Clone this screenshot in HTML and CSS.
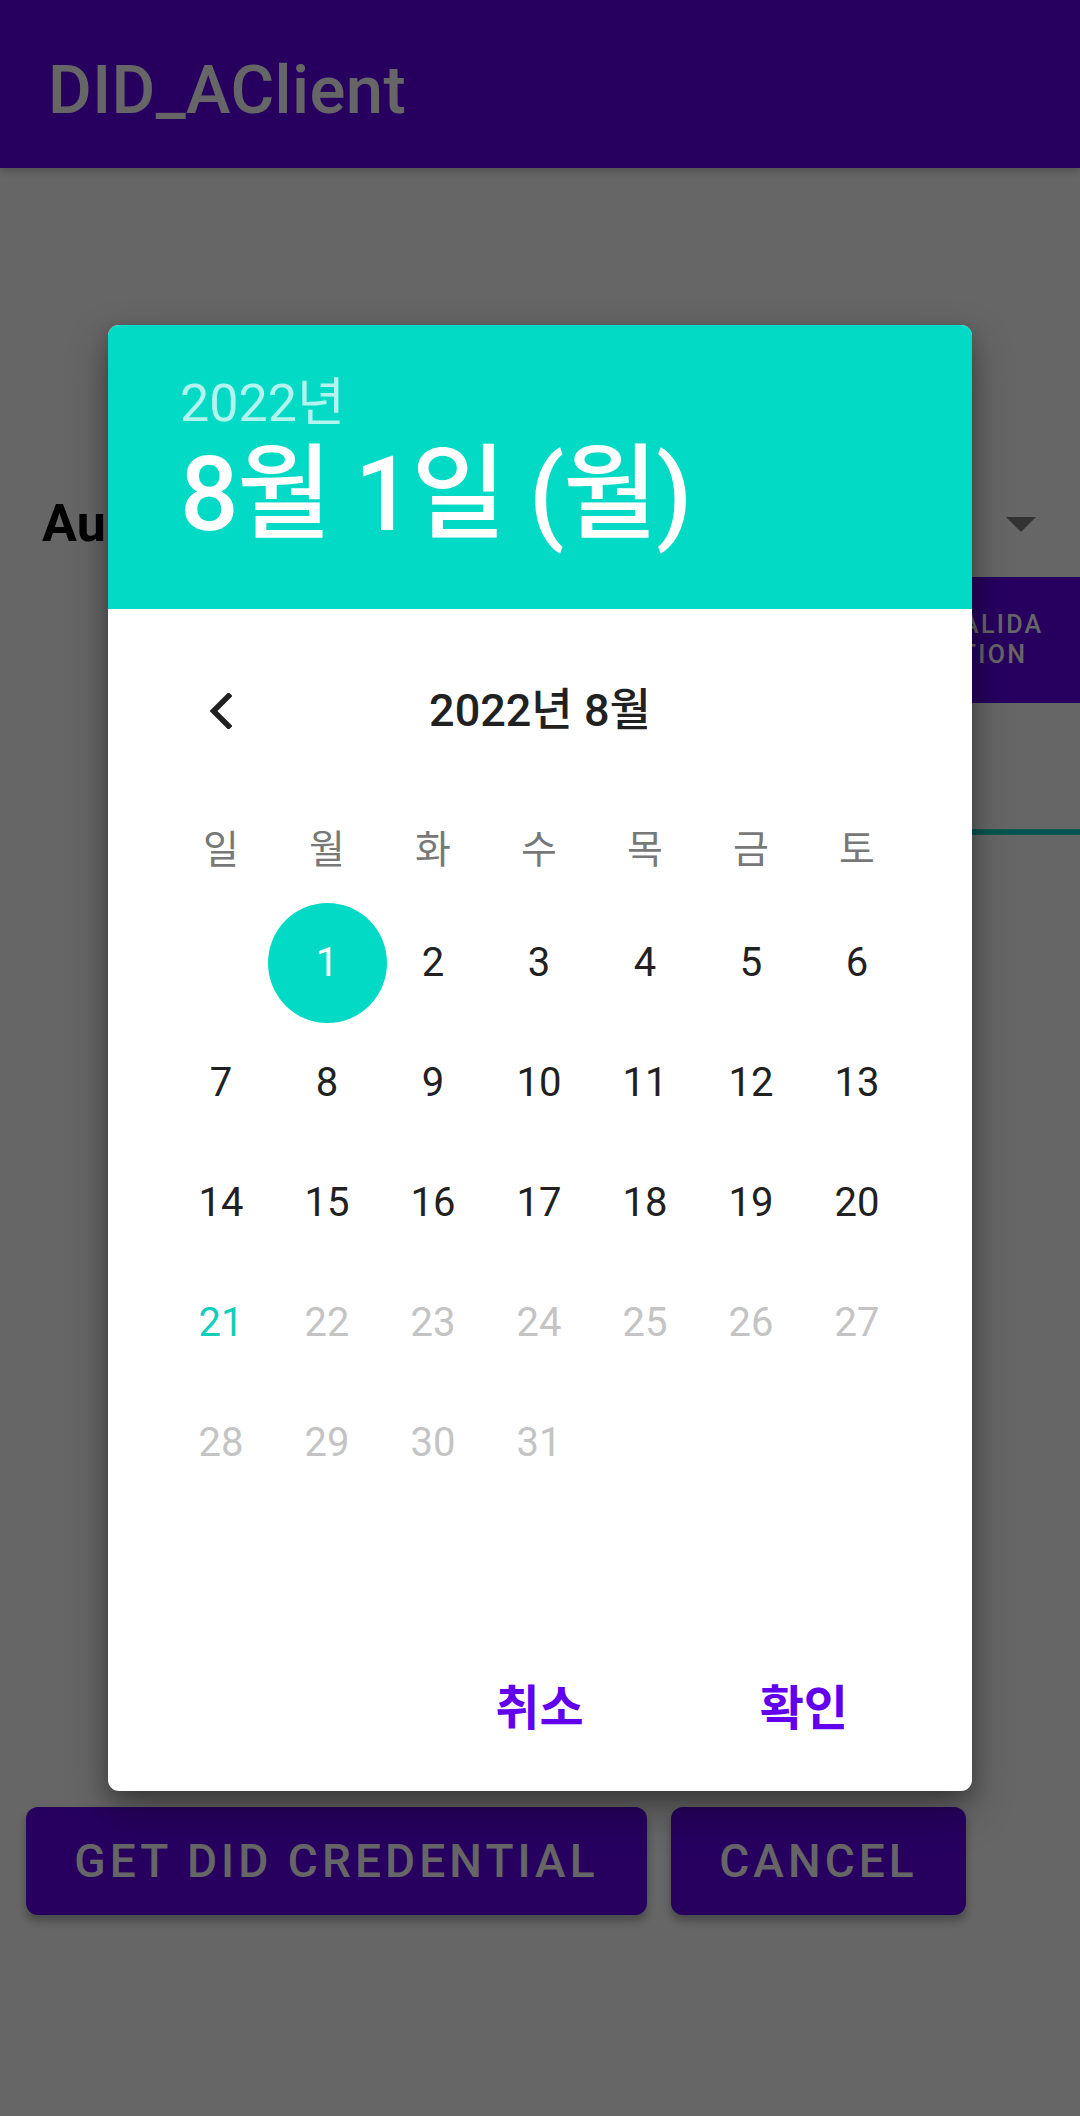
FILE: index.html
```html
<!DOCTYPE html>
<html lang="ko">
<head>
<meta charset="utf-8">
<title>DID_AClient</title>
<link rel="stylesheet" href="styles.css">
</head>
<body>
<div class="page">
  <header class="appbar"><span class="appbar-title">DID_AClient</span></header>
  <main class="content">
    <div class="spinner-row">
      <span class="label">Au</span>
      <svg class="spinner-arrow" width="30" height="15" viewBox="0 0 30 15"><path d="M0 0 L30 0 L15 15 Z" fill="#808080"/></svg>
    </div>
    <div class="validate-row">
      <button class="validate-btn">VALIDA<br>TION</button>
    </div>
    <div class="field"></div>
    <div class="actions">
      <button class="action-btn action-wide">GET DID CREDENTIAL</button>
      <button class="action-btn action-narrow">CANCEL</button>
    </div>
  </main>

  <div class="scrim">
    <div class="dialog">
      <div class="dialog-header">
        <div class="header-year">2022년</div>
        <div class="header-date">8월 1일 (월)</div>
      </div>
      <div class="month-row">
        <div class="month-prev">
          <svg width="24" height="36" viewBox="0 0 24 36"><path d="M20.5 3 L5.5 18 L20.5 33" fill="none" stroke="#212121" stroke-width="5.5" stroke-linecap="square" stroke-linejoin="miter"/></svg>
        </div>
        <div class="month-title">2022년 8월</div>
        <div></div>
      </div>
      <div class="weekdays">
        <span>일</span><span>월</span><span>화</span><span>수</span><span>목</span><span>금</span><span>토</span>
      </div>
      <div class="days">
        <span></span>
        <span class="day selected"><i class="dot">1</i></span>
        <span class="day">2</span><span class="day">3</span><span class="day">4</span><span class="day">5</span><span class="day">6</span>
        <span class="day">7</span><span class="day">8</span><span class="day">9</span><span class="day">10</span><span class="day">11</span><span class="day">12</span><span class="day">13</span>
        <span class="day">14</span><span class="day">15</span><span class="day">16</span><span class="day">17</span><span class="day">18</span><span class="day">19</span><span class="day">20</span>
        <span class="day today">21</span><span class="day off">22</span><span class="day off">23</span><span class="day off">24</span><span class="day off">25</span><span class="day off">26</span><span class="day off">27</span>
        <span class="day off">28</span><span class="day off">29</span><span class="day off">30</span><span class="day off">31</span>
      </div>
      <div class="dialog-buttons">
        <button class="text-btn">취소</button>
        <button class="text-btn">확인</button>
      </div>
    </div>
  </div>
</div>
</body>
</html>
```

FILE: styles.css
```css
html, body {
  margin: 0;
  padding: 0;
}
body {
  width: 1080px;
  height: 2116px;
  overflow: hidden;
  font-family: "Roboto", "Noto Sans CJK KR", sans-serif;
}
.page {
  position: relative;
  width: 1080px;
  height: 2116px;
  background: #ffffff;
  overflow: hidden;
}
.appbar {
  box-sizing: border-box;
  height: 168px;
  background: #6200ee;
  padding: 50px 0 0 48px;
  box-shadow: 0 4px 8px rgba(0,0,0,0.2);
}
.appbar-title {
  display: block;
  color: #ffffff;
  font-size: 67px;
  font-weight: 500;
  line-height: 80px;
  letter-spacing: 0.4px;
}
.content {
  display: flex;
  flex-direction: column;
}
.spinner-row {
  margin-top: 326px;
  height: 60px;
  display: flex;
  align-items: center;
  justify-content: space-between;
  padding: 0 44px 0 42px;
}
.label {
  font-size: 52px;
  font-weight: 700;
  line-height: 60px;
  color: #000000;
}
.validate-row {
  margin-top: 23px;
  display: flex;
  justify-content: flex-end;
}
.validate-btn {
  width: 172px;
  height: 126px;
  border: 0;
  background: #6200ee;
  color: #ffffff;
  font-family: "Roboto", sans-serif;
  font-size: 25px;
  font-weight: 500;
  line-height: 30px;
  letter-spacing: 2.3px;
  padding: 0;
  text-align: center;
}
.field {
  margin: 126px 0 0 540px;
  height: 6px;
  background: #03dac5;
}
.actions {
  margin-top: 972px;
  display: flex;
  gap: 24px;
  padding-left: 26px;
}
.action-btn {
  height: 108px;
  border: 0;
  border-radius: 12px;
  background: #6200ee;
  color: #ffffff;
  font-family: "Roboto", sans-serif;
  font-size: 46px;
  font-weight: 500;
  letter-spacing: 4.1px;
  padding: 0;
  box-shadow: 0 6px 10px rgba(0,0,0,0.3);
}
.action-wide { width: 621px; }
.action-narrow { width: 295px; }

.scrim {
  position: absolute;
  inset: 0;
  background: rgba(0,0,0,0.6);
}
.dialog {
  position: absolute;
  left: 108px;
  top: 325px;
  width: 864px;
  background: #ffffff;
  border-radius: 11px;
  overflow: hidden;
  box-shadow: 0 18px 40px rgba(0,0,0,0.35), 0 6px 16px rgba(0,0,0,0.2);
}
.dialog-header {
  box-sizing: border-box;
  height: 284px;
  background: #03dac5;
  padding: 50px 0 0 72px;
}
.header-year {
  font-size: 52px;
  line-height: 58px;
  color: rgba(255,255,255,0.7);
}
.header-date {
  font-size: 103px;
  font-weight: 500;
  line-height: 124px;
  letter-spacing: -1.5px;
  color: #ffffff;
}
.month-row {
  margin-top: 42px;
  height: 120px;
  display: grid;
  grid-template-columns: 1fr auto 1fr;
  align-items: center;
}
.month-prev {
  display: flex;
  align-items: center;
  padding-left: 100px;
}
.month-title {
  font-size: 45px;
  font-weight: 500;
  line-height: 120px;
  color: #212121;
}
.weekdays {
  margin-top: 26px;
  display: grid;
  grid-template-columns: repeat(7, 106px);
  padding-left: 60px;
  height: 106px;
}
.weekdays span {
  display: flex;
  align-items: center;
  justify-content: center;
  font-size: 39px;
  line-height: 106px;
  color: #787878;
}
.days {
  display: grid;
  grid-template-columns: repeat(7, 106px);
  grid-auto-rows: 120px;
  padding-left: 60px;
  height: 600px;
}
.day {
  display: flex;
  align-items: center;
  justify-content: center;
  font-size: 40px;
  line-height: 120px;
  color: #212121;
}
.day.today { color: #0fcfbc; }
.day.off { color: #c4c4c4; }
.dot {
  flex-shrink: 0;
  font-style: normal;
  width: 119px;
  height: 120px;
  border-radius: 50%;
  background: #03dac5;
  color: #ffffff;
  display: flex;
  align-items: center;
  justify-content: center;
  line-height: 120px;
}
.dialog-buttons {
  margin-top: 140px;
  padding: 0 96px 16px 0;
  display: flex;
  justify-content: flex-end;
  gap: 120px;
}
.text-btn {
  height: 132px;
  border: 0;
  background: transparent;
  padding: 0 28px;
  font-family: "Roboto", "Noto Sans CJK KR", sans-serif;
  font-size: 48px;
  font-weight: 700;
  line-height: 132px;
  color: #6200ee;
}
```
